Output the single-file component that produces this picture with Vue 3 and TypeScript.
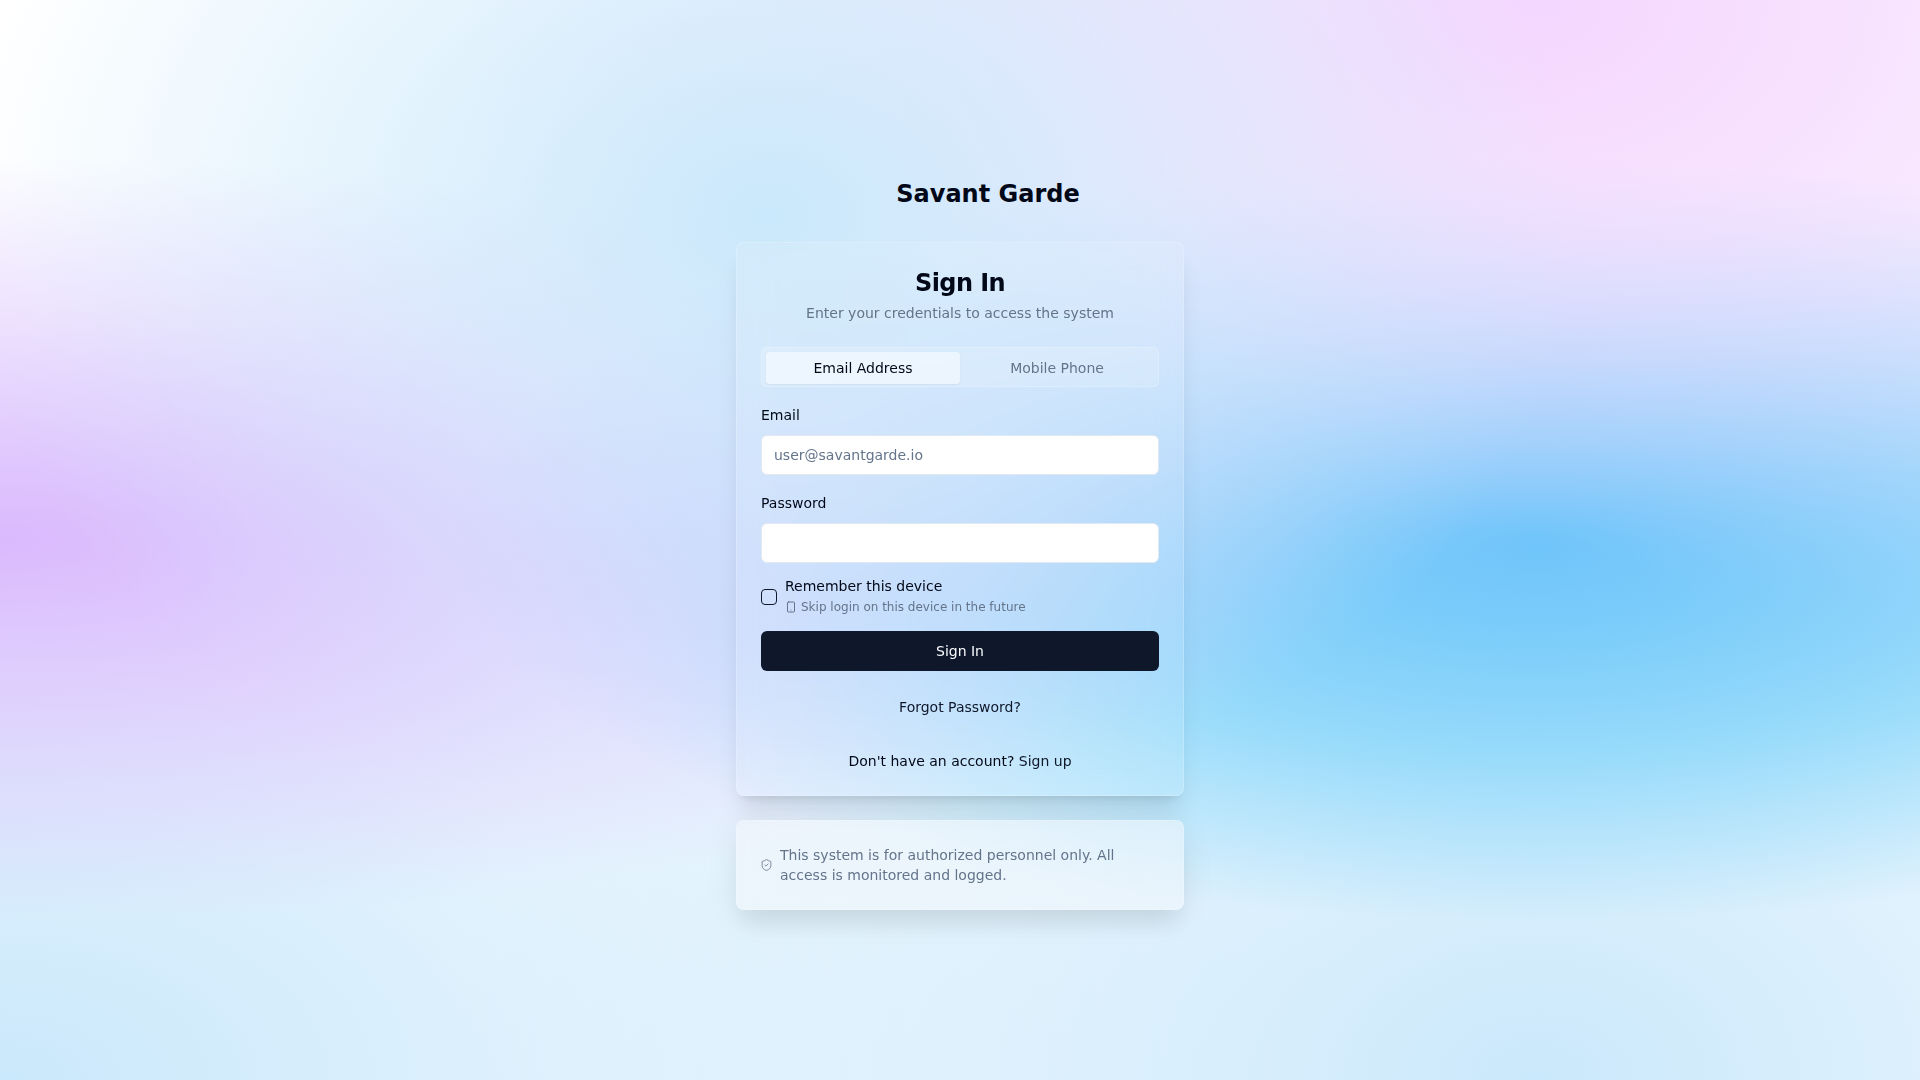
<script setup lang="ts">
import { ref } from 'vue'

type Method = 'email' | 'phone'

const tabs: { id: Method; label: string }[] = [
  { id: 'email', label: 'Email Address' },
  { id: 'phone', label: 'Mobile Phone' },
]
const method = ref<Method>('email')
const identifier = ref('')
const password = ref('')
const remember = ref(false)
</script>

<template>
  <main class="page">
    <div class="stack">
      <header class="brand">
        <h1>Savant Garde</h1>
      </header>

      <section class="card">
        <div class="card-head">
          <h2>Sign In</h2>
          <p>Enter your credentials to access the system</p>
        </div>

        <form class="form" @submit.prevent>
          <div class="tabs" role="tablist">
            <button
              v-for="tab in tabs"
              :key="tab.id"
              type="button"
              role="tab"
              class="tab"
              :class="{ active: method === tab.id }"
              :aria-selected="method === tab.id"
              @click="method = tab.id"
            >
              {{ tab.label }}
            </button>
          </div>

          <div class="field">
            <label for="identifier">{{ method === 'email' ? 'Email' : 'Phone' }}</label>
            <input
              id="identifier"
              v-model="identifier"
              :type="method === 'email' ? 'email' : 'tel'"
              placeholder="user@savantgarde.io"
            />
          </div>

          <div class="field">
            <label for="password">Password</label>
            <input id="password" v-model="password" type="password" />
          </div>

          <div class="remember">
            <input id="remember" v-model="remember" type="checkbox" />
            <div class="remember-text">
              <label for="remember">Remember this device</label>
              <p>
                <svg viewBox="0 0 24 24" aria-hidden="true">
                  <rect width="14" height="20" x="5" y="2" rx="2" ry="2" />
                  <path d="M12 18h.01" />
                </svg>
                Skip login on this device in the future
              </p>
            </div>
          </div>

          <button type="submit" class="submit">Sign In</button>
          <button type="button" class="forgot">Forgot Password?</button>
        </form>

        <p class="signup">Don't have an account? <a href="#signup">Sign up</a></p>
      </section>

      <aside class="card notice">
        <svg viewBox="2 1 20 22" aria-hidden="true">
          <path
            d="M20 13c0 5-3.500 7.500-7.660 8.950a1 1 0 0 1-.67-.01C7.500 20.500 4 18 4 13V6a1 1 0 0 1 1-1c2 0 4.500-1.200 6.240-2.720a1.170 1.170 0 0 1 1.520 0C14.510 3.810 17 5 19 5a1 1 0 0 1 1 1z"
          />
          <path d="m9 12 2 2 4-4" />
        </svg>
        <p>This system is for authorized personnel only. All access is monitored and logged.</p>
      </aside>
    </div>
  </main>
</template>

<style>
body {
  margin: 0;
}
</style>

<style scoped>
.page {
  box-sizing: border-box;
  min-height: 100vh;
  padding: 16px;
  display: flex;
  align-items: center;
  justify-content: center;
  font-family: "DejaVu Sans", sans-serif;
  font-size: 14px;
  line-height: 20px;
  color: #020817;
  background-color: #ffffff;
  background-image:
    radial-gradient(at 40% 20%, #cae8fb 0px, transparent 50%),
    radial-gradient(at 80% 0%, #f4d6fe 0px, transparent 50%),
    radial-gradient(at 0% 50%, #dab9fd 0px, transparent 50%),
    radial-gradient(at 80% 50%, #38bdf8 0px, transparent 50%),
    radial-gradient(at 0% 100%, #cae8fb 0px, transparent 50%),
    radial-gradient(at 80% 100%, #cae8fb 0px, transparent 50%);
}

.stack {
  width: 100%;
  max-width: 448px;
  display: flex;
  flex-direction: column;
  gap: 24px;
}

h1,
h2,
p {
  margin: 0;
}

button,
input {
  box-sizing: border-box;
  font: inherit;
  color: inherit;
}

button {
  border: 0;
  background: none;
  cursor: pointer;
}

svg {
  flex: none;
  width: 12px;
  height: 12px;
  fill: none;
  stroke: currentColor;
  stroke-width: 2;
  stroke-linecap: round;
  stroke-linejoin: round;
}

.brand {
  height: 48px;
  padding-left: 56px;
  display: flex;
  align-items: center;
  justify-content: center;
}

h1,
h2 {
  font-size: 24px;
  line-height: 32px;
  font-weight: 700;
}

h2 {
  letter-spacing: -0.025em;
}

.card {
  padding: 24px;
  border: 1px solid rgba(255, 255, 255, 0.2);
  border-radius: 8px;
  background: rgba(255, 255, 255, 0.1);
  backdrop-filter: blur(16px);
  box-shadow:
    0 20px 25px -5px rgba(0, 0, 0, 0.1),
    0 8px 10px -6px rgba(0, 0, 0, 0.1);
}

.card-head {
  display: flex;
  flex-direction: column;
  gap: 4px;
  padding-bottom: 24px;
  text-align: center;
}

.card-head p {
  color: #64748b;
}

.form {
  display: flex;
  flex-direction: column;
  gap: 16px;
}

.tabs {
  box-sizing: border-box;
  height: 40px;
  padding: 4px;
  display: grid;
  grid-template-columns: 1fr 1fr;
  border: 1px solid rgba(255, 255, 255, 0.2);
  border-radius: 6px;
  background: rgba(255, 255, 255, 0.15);
}

.tab {
  height: 32px;
  padding: 0;
  border-radius: 4px;
  color: #64748b;
}

.tab.active {
  color: #020817;
  background: rgba(255, 255, 255, 0.5);
  box-shadow: 0 1px 2px rgba(0, 0, 0, 0.05);
}

.field {
  display: flex;
  flex-direction: column;
  gap: 8px;
}

.field label {
  line-height: 24px;
}

.field input {
  height: 40px;
  width: 100%;
  padding: 8px 12px;
  border: 1px solid #e2e8f0;
  border-radius: 6px;
  background: #ffffff;
}

.field input::placeholder {
  color: #64748b;
  opacity: 1;
}

.remember {
  display: flex;
  align-items: center;
  gap: 8px;
}

.remember input {
  appearance: none;
  flex: none;
  width: 16px;
  height: 16px;
  margin: 0;
  border: 1px solid #0f172a;
  border-radius: 4px;
}

.remember input:checked {
  background: #0f172a;
}

.remember-text {
  display: flex;
  flex-direction: column;
  gap: 6px;
}

.remember-text label {
  line-height: 14px;
}

.remember-text p {
  display: flex;
  align-items: center;
  gap: 4px;
  font-size: 12px;
  line-height: 16px;
  color: #64748b;
}

.submit,
.forgot {
  height: 40px;
  border-radius: 6px;
}

.submit {
  background: #0f172a;
  color: #f8fafc;
}

.forgot {
  color: #0f172a;
}

.signup {
  padding-top: 24px;
  text-align: center;
}

.signup a {
  color: #0f172a;
  text-decoration: none;
}

.notice {
  display: flex;
  align-items: center;
  gap: 8px;
  color: #64748b;
  background: rgba(246, 248, 252, 0.5);
  box-shadow:
    0 20px 25px -5px rgba(0, 0, 0, 0.06),
    0 8px 32px rgba(0, 0, 0, 0.08);
}

.notice svg {
  width: 11px;
  stroke-width: 1.5;
}
</style>
